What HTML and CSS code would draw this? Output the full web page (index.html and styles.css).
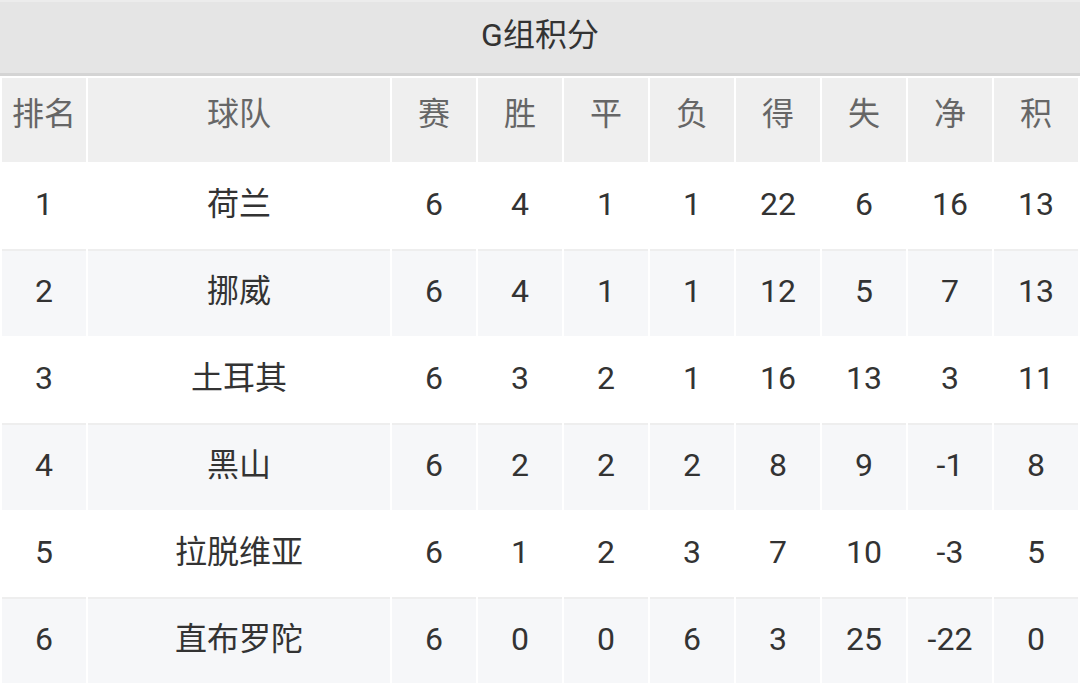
FILE: index.html
```html
<!DOCTYPE html>
<html lang="zh-CN">
<head>
<meta charset="utf-8">
<title>G组积分</title>
<link rel="stylesheet" href="styles.css">
</head>
<body>
<div class="title">G组积分</div>
<table class="standings">
  <colgroup>
    <col class="c-rank"><col class="c-team">
    <col class="c-num"><col class="c-num"><col class="c-num"><col class="c-num">
    <col class="c-num"><col class="c-num"><col class="c-num"><col class="c-num">
  </colgroup>
  <thead>
    <tr><th>排名</th><th>球队</th><th>赛</th><th>胜</th><th>平</th><th>负</th><th>得</th><th>失</th><th>净</th><th>积</th></tr>
  </thead>
  <tbody>
    <tr><td>1</td><td>荷兰</td><td>6</td><td>4</td><td>1</td><td>1</td><td>22</td><td>6</td><td>16</td><td>13</td></tr>
    <tr><td>2</td><td>挪威</td><td>6</td><td>4</td><td>1</td><td>1</td><td>12</td><td>5</td><td>7</td><td>13</td></tr>
    <tr><td>3</td><td>土耳其</td><td>6</td><td>3</td><td>2</td><td>1</td><td>16</td><td>13</td><td>3</td><td>11</td></tr>
    <tr><td>4</td><td>黑山</td><td>6</td><td>2</td><td>2</td><td>2</td><td>8</td><td>9</td><td>-1</td><td>8</td></tr>
    <tr><td>5</td><td>拉脱维亚</td><td>6</td><td>1</td><td>2</td><td>3</td><td>7</td><td>10</td><td>-3</td><td>5</td></tr>
    <tr><td>6</td><td>直布罗陀</td><td>6</td><td>0</td><td>0</td><td>6</td><td>3</td><td>25</td><td>-22</td><td>0</td></tr>
  </tbody>
</table>
</body>
</html>
```

FILE: styles.css
```css
html, body {
  margin: 0;
  padding: 0;
  background: #ffffff;
}
body {
  width: 1080px;
  height: 683px;
  overflow: hidden;
  font-family: Roboto, "Noto Sans CJK SC", sans-serif;
}
.title {
  height: 67px;
  padding-bottom: 4px;
  line-height: 67px;
  border-top: 2px solid #ececec;
  border-bottom: 3px solid #d4d4d4;
  background: #e5e5e5;
  text-align: center;
  font-size: 32px;
  color: #333333;
}
.standings {
  width: 1080px;
  border-collapse: separate;
  border-spacing: 2px;
  table-layout: fixed;
  margin: 0;
}
.c-rank { width: 84px; }
.c-team { width: 302px; }
.c-num { width: 84px; }
.standings th,
.standings td {
  padding: 0;
  text-align: center;
  vertical-align: middle;
  font-size: 32px;
  font-weight: 400;
  line-height: 40px;
}
.standings th {
  height: 72px;
  padding-bottom: 12px;
  background: #efefef;
  color: #666666;
}
.standings td {
  height: 80px;
  padding-bottom: 5px;
  color: #333333;
  background: #ffffff;
}
.standings tbody tr:nth-child(even) td {
  background: #f6f7f9;
  box-shadow: 0 -2px 0 0 #eeeeee;
}
```
